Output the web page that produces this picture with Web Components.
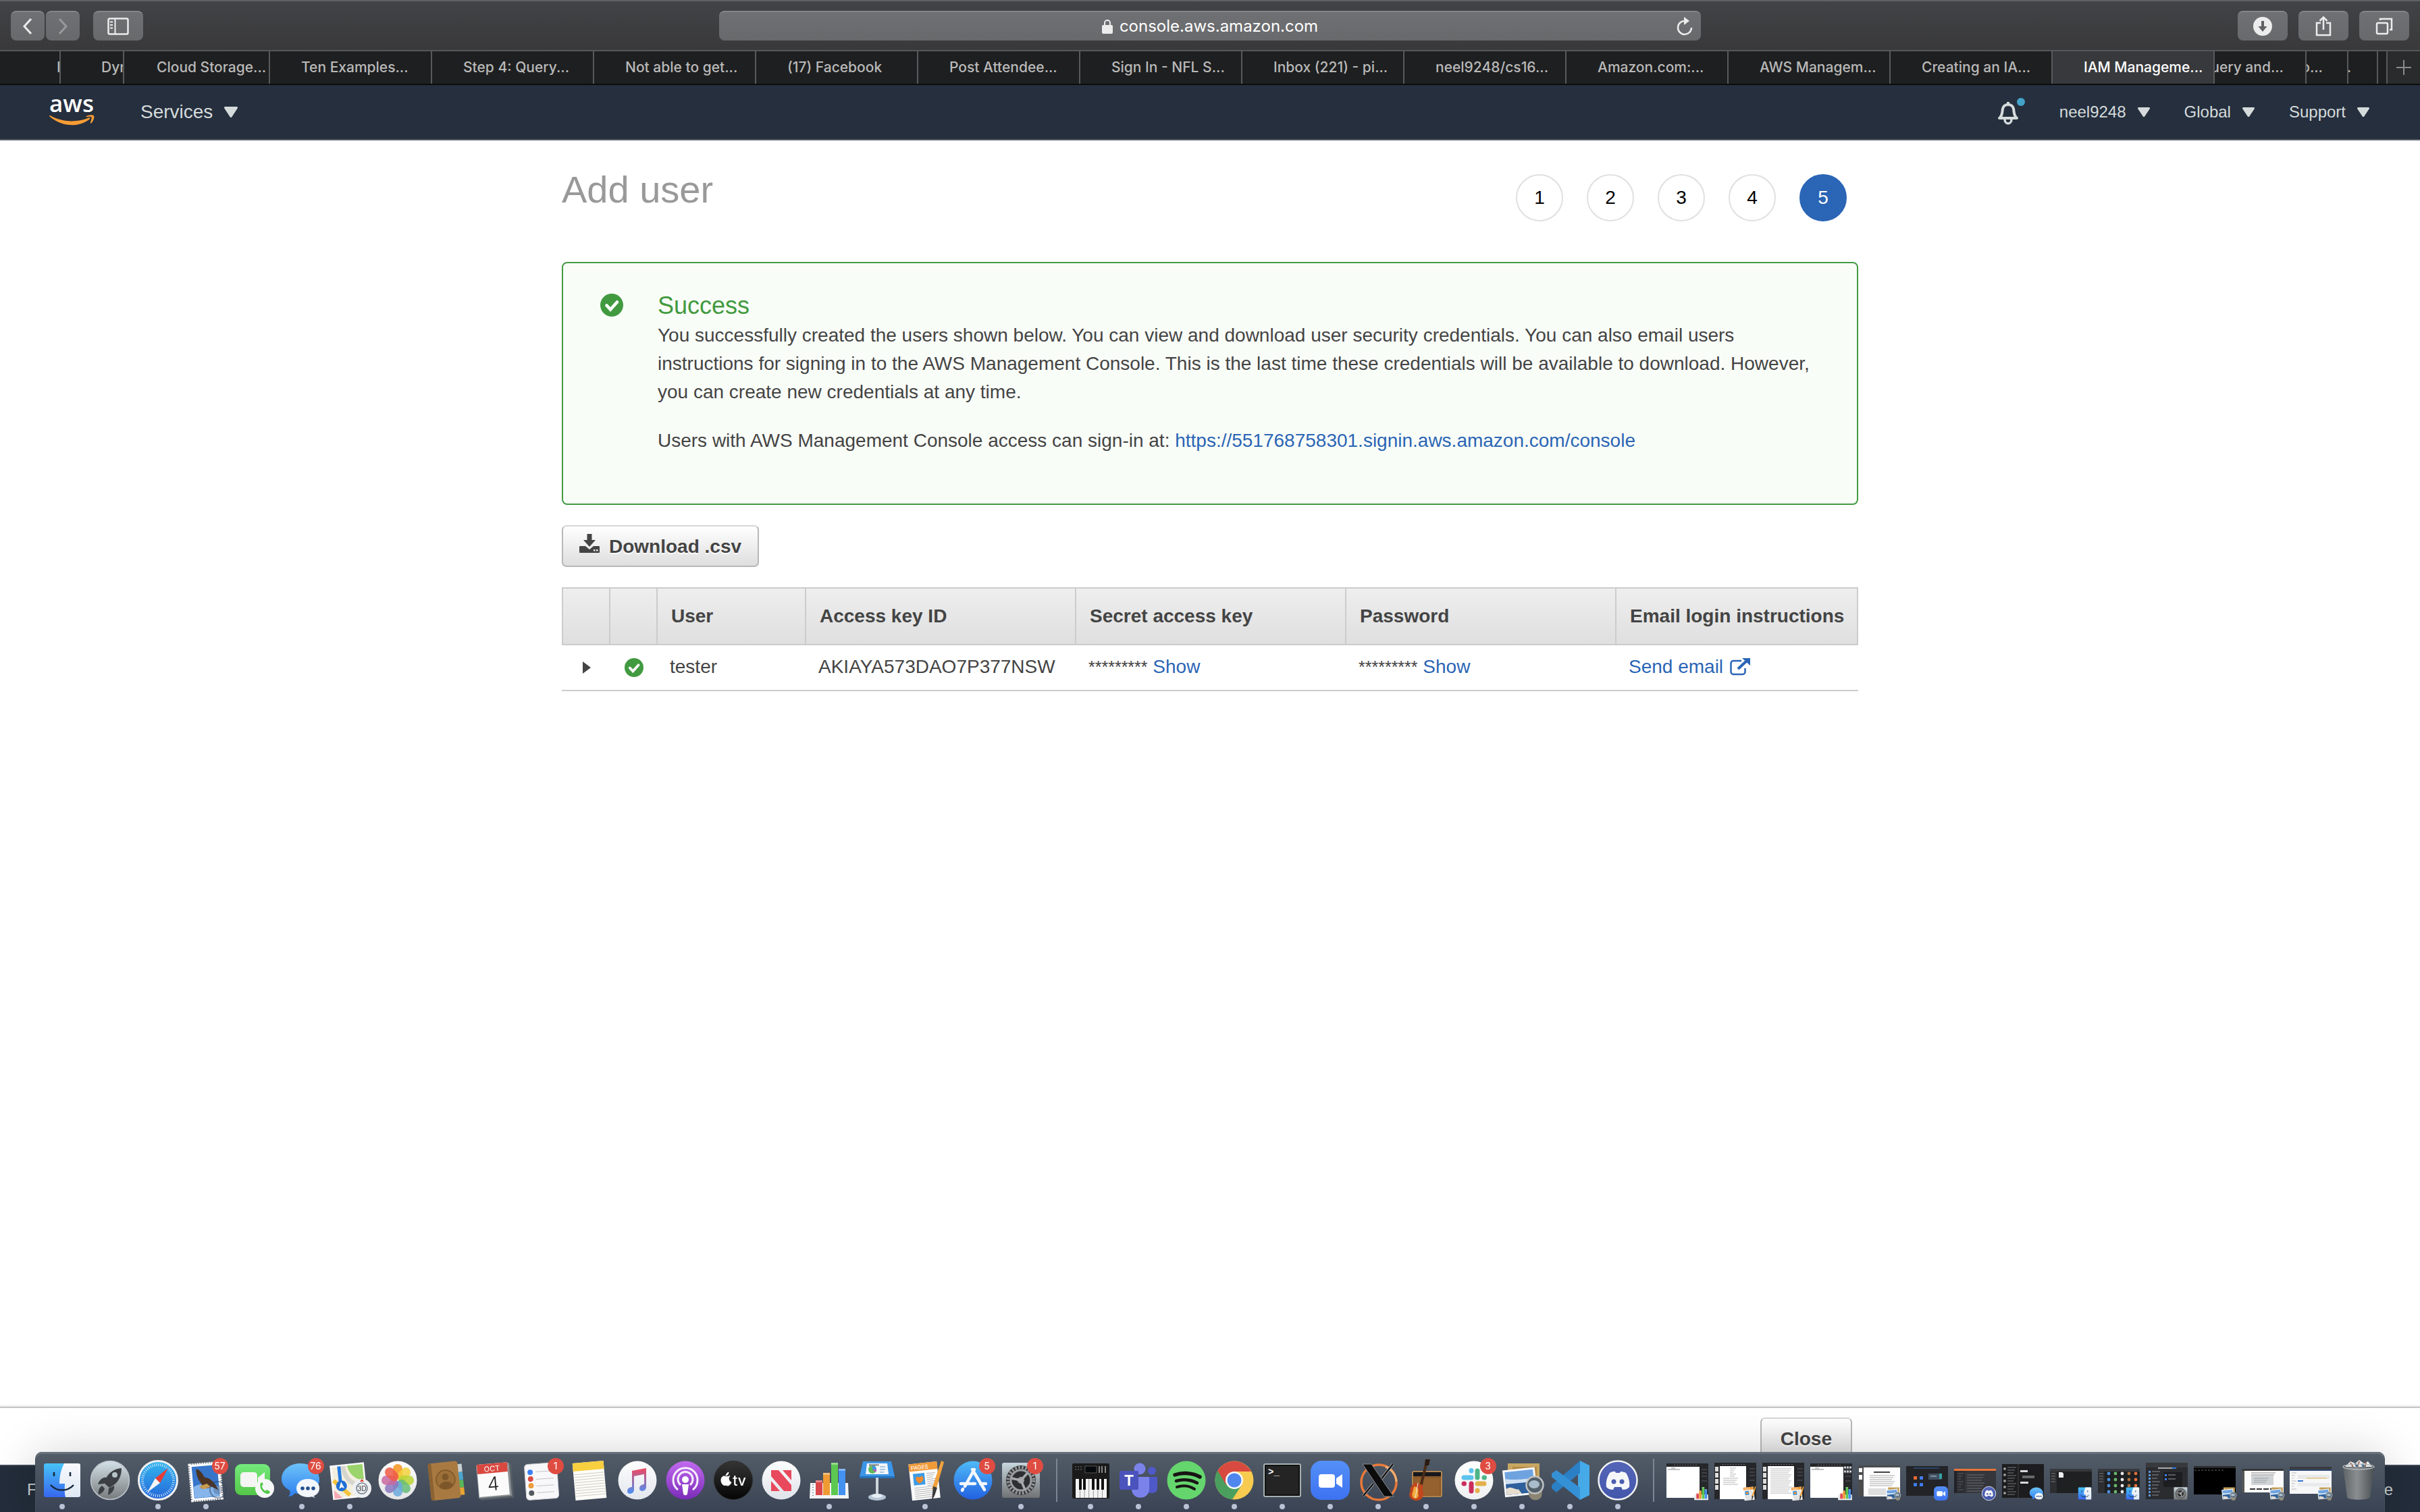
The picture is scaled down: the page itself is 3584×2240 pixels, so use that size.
<!DOCTYPE html>
<html lang="en">
<head>
<meta charset="utf-8">
<title>IAM Management Console</title>
<style>
  html, body { margin: 0; height: 100%; }
  body { font-family: "Liberation Sans", Arial, sans-serif; font-size: 28px; line-height: 42px; color: #444; background: #fff; overflow: hidden; }
</style>
</head>
<body>
<desktop-screen>
  <browser-toolbar slot="chrome"></browser-toolbar>
  <browser-tabs slot="chrome"></browser-tabs>
  <aws-nav slot="chrome"></aws-nav>
  <add-user-page></add-user-page>
  <wizard-actions slot="bottom"></wizard-actions>
  <aws-footer slot="bottom"></aws-footer>
  <mac-dock slot="dock"></mac-dock>
</desktop-screen>
<script>
const component = (name, render) => customElements.define(name, class extends HTMLElement {
  connectedCallback() {
    if (this.shadowRoot) return;
    const root = this.attachShadow({ mode: 'open' });
    const template = document.createElement('template');
    template.innerHTML = '<style>:host,*{box-sizing:border-box}</style>' + render(this);
    root.append(template.content.cloneNode(true));
  }
});

/* ---------- shell ---------- */
component('desktop-screen', () => `
  <style>
    :host { display: flex; flex-direction: column; height: 100vh; overflow: hidden; }
    main { flex: 1; min-height: 0; }
    ::slotted([slot]) { flex-shrink: 0; }
  </style>
  <slot name="chrome"></slot>
  <main><slot></slot></main>
  <slot name="bottom"></slot>
  <slot name="dock"></slot>`);

/* ---------- browser ---------- */
component('tool-button', () => `
  <style>
    :host { display: block; }
    button { display: flex; align-items: center; justify-content: center; width: var(--w, 74px); height: 44px; padding: 0; border: 0;
      border-top: 2px solid #858688; border-radius: 8px; background: linear-gradient(#6f7073, #68696b); }
  </style>
  <button type="button"><slot></slot></button>`);

component('browser-toolbar', () => `
  <style>
    :host { display: flex; align-items: center; justify-content: space-between; height: 76px; padding: 0 16px; font-family: Inter, sans-serif;
      border-top: 2px solid #5f6164; border-bottom: 2px solid #555759; background: linear-gradient(#424346, #39393b); }
    .group { display: flex; gap: 16px; flex: 1; }
    .nav { display: flex; gap: 2px; margin-right: 4px; --w: 50px; }
    .right { justify-content: flex-end; }
    form { display: flex; align-items: center; flex: 0 1 1454px; height: 44px; margin: 0; padding: 0 12px; border-radius: 8px;
      border-top: 2px solid #858688; background: linear-gradient(#6f7073, #68696b); }
    label { flex: 1; display: flex; align-items: center; justify-content: center; gap: 10px; padding-left: 24px; }
    input { field-sizing: content; border: 0; padding: 0; outline: 0; background: none; color: #fff; font: 24px/40px Inter, sans-serif; }
    .reload { display: flex; padding: 0; border: 0; background: none; }
    svg { display: block; fill: none; stroke: #ececec; stroke-width: 3; }
  </style>
  <div class="group">
    <div class="nav">
      <tool-button><svg width="16" height="26"><path d="M13 2 3 13l10 11"/></svg></tool-button>
      <tool-button><svg width="16" height="26" style="stroke:#98999b"><path d="M3 2l10 11L3 24"/></svg></tool-button>
    </div>
    <tool-button><svg width="32" height="26"><rect x="1.500" y="1.500" width="29" height="23" rx="2" stroke-width="2.500"/><path d="M11.500 2v22" stroke-width="2"/><path d="M4 6.500h4M4 11h4M4 15.500h4" stroke-width="2"/></svg></tool-button>
  </div>
  <form>
    <label><svg width="16" height="22"><path d="M4 10V6a4 4 0 0 1 8 0v4" stroke-width="2"/><rect y="9" width="16" height="13" rx="2" fill="#ececec" stroke="none"/></svg>
      <input aria-label="Address" value="console.aws.amazon.com"></label>
    <button class="reload" type="button" aria-label="Reload"><svg width="24" height="28"><path d="M13 6a10 10 0 1 0 9 10" stroke-width="2.500"/><path d="M11 0l8 6-8 6z" fill="#ececec" stroke="none"/></svg></button>
  </form>
  <div class="group right">
    <tool-button><svg width="28" height="28"><circle cx="14" cy="14" r="14" fill="#ececec" stroke="none"/><path d="M14 6v10" stroke="#606163" stroke-width="4"/><path d="M7.500 14h13L14 22z" fill="#606163" stroke="none"/></svg></tool-button>
    <tool-button><svg width="26" height="32"><path d="M9 11H3v18h20V11h-6M13 21V3M7.500 8 13 2.500 18.500 8" stroke-width="2.500"/></svg></tool-button>
    <tool-button><svg width="26" height="26"><rect x="2" y="8" width="16" height="16" rx="2" stroke-width="2.500"/><path d="M7 4V2h17v16h-3" stroke-width="2.500"/></svg></tool-button>
  </div>`);

component('browser-tab', () => `
  <style>
    :host { display: flex; min-width: 0; height: 48px; overflow: hidden; border-right: 2px solid #58595b; background: #1e1f20; color: #b9b9b9; }
    :host([selected]) { background: #38393c; color: #fff; }
    button { flex: 1; display: flex; justify-content: var(--side, flex-start); min-width: 0; padding: 0 var(--after, 0) 0 var(--before, 46px); border: 0; background: none; color: inherit; font: 500 21px/48px Inter, sans-serif; white-space: nowrap; }
    :host([cut]) { --side: flex-end; --before: 0; }
  </style>
  <button type="button"><slot></slot></button>`);

component('browser-tabs', () => {
  const full = ['Ten Examples...', 'Step 4: Query...', 'Not able to get...', '(17) Facebook', 'Post Attendee...', 'Sign In - NFL S...', 'Inbox (221) - pi...', 'neel9248/cs16...', 'Amazon.com:...', 'AWS Managem...', 'Creating an IA...'];
  return `
  <style>
    :host { display: flex; height: 50px; border-bottom: 2px solid #0c0c0c; background: #1e1f20; }
    .full { flex: 240 1 0; }
    .add { display: flex; align-items: center; justify-content: center; flex: 0 0 48px; padding: 0; border: 0; background: #2a2b2c; }
    .s1 { flex: 0 0 90px; --before: 84px; } .s2 { flex: 0 0 94px; --before: 60px; } .s3 { flex: 0 0 216px; --before: 48px; }
    .e1 { flex: 0 0 136px; --after: 32px; } .e2 { flex: 0 0 62px; --after: 36px; } .e3 { flex: 0 0 44px; --after: 38px; } .e4 { flex: 0 0 14px; }
  </style>
  <browser-tab class="s1">I</browser-tab><browser-tab class="s2">Dyr</browser-tab><browser-tab class="s3">Cloud Storage...</browser-tab>
  ${full.map(t => `<browser-tab class="full">${t}</browser-tab>`).join('')}
  <browser-tab class="full" selected>IAM Manageme...</browser-tab>
  <browser-tab class="e1" cut>uery and...</browser-tab><browser-tab class="e2" cut>o...</browser-tab><browser-tab class="e3" cut>.</browser-tab><browser-tab class="e4"></browser-tab>
  <button class="add" type="button" aria-label="New tab"><svg width="22" height="22" stroke="#8b8b8b" stroke-width="2"><path d="M11 0v22M0 11h22"/></svg></button>`;
});

/* ---------- console header ---------- */
component('nav-menu', () => `
  <style>
    :host { display: block; }
    button { display: flex; align-items: center; gap: 17px; padding: 0; border: 0; background: none; color: #d5dbdb; font: inherit; }
    svg { display: block; width: var(--caret, 18px); }
  </style>
  <button type="button"><slot></slot><svg viewBox="0 0 20 16" fill="#d5dbdb"><path d="M1.500 0h17a1.500 1.500 0 0 1 1.200 2.400l-8.500 13a1.500 1.500 0 0 1-2.400 0L.3 2.400A1.500 1.500 0 0 1 1.500 0z"/></svg></button>`);

component('aws-nav', () => `
  <style>
    :host { display: flex; align-items: center; justify-content: space-between; height: 82px; padding: 0 75px 0 73px; border-bottom: 2px solid #545b64; background: #252f3e; }
    .left { display: flex; align-items: center; gap: 68px; font-size: 28px; --caret: 20px; }
    .right { display: flex; align-items: center; gap: 51px; font-size: 24px; }
    .bell { padding: 0; border: 0; background: none; }
    svg { display: block; }
  </style>
  <div class="left">
    <a href="#" aria-label="aws"><svg width="67" height="44" viewBox="0 0 67 44"><text x="33" y="22" text-anchor="middle" font-family="Open Sans, sans-serif" font-weight="600" font-size="35" fill="#fff">aws</text>
      <g fill="#f79c34"><path d="M1 27C19 37 40 38 58.500 30.500c1.500-.6 2.500 1 1.300 2C44 45.500 18 44 .4 28.500-.4 27.600.2 26.600 1 27z"/><path d="M54.500 28.500c3-2.500 9-3 11-1.500s.5 8-3.500 11.500c-.8.7-1.500.2-1.200-.7 1-3 2.500-7 1.500-8.300s-4-.8-7-.3c-1 .2-1.500-.2-.8-.7z"/></g></svg></a>
    <nav-menu>Services</nav-menu>
  </div>
  <div class="right">
    <button class="bell" type="button" aria-label="Notifications"><svg width="42" height="42" viewBox="0 0 42 42"><path d="M4 30c5-4 4-9 5-14 1-4 4-6 8-6s7 2 8 6c1 5 0 10 5 14z" fill="none" stroke="#d5dbdb" stroke-width="4" stroke-linejoin="round"/><path d="M17 6v4" stroke="#d5dbdb" stroke-width="4"/><path d="M12 32a5 6 0 0 0 10 0" fill="none" stroke="#d5dbdb" stroke-width="3.500"/><circle cx="36" cy="6" r="6" fill="#44a3c9"/></svg></button>
    <nav-menu>neel9248</nav-menu><nav-menu>Global</nav-menu><nav-menu>Support</nav-menu>
  </div>`);

/* ---------- wizard ---------- */
component('check-badge', () => `
  <style>:host { display: block; width: var(--size, 28px); height: var(--size, 28px); } svg { display: block; }</style>
  <svg viewBox="0 0 34 34"><circle cx="17" cy="17" r="17" fill="#429a40"/><path d="M9.500 17.500l5.500 6 10-11" fill="none" stroke="#fff" stroke-width="4.600" stroke-linecap="round"/></svg>`);

component('console-button', () => `
  <style>
    :host { display: inline-block; }
    button { display: flex; align-items: baseline; gap: 14px; height: 62px; padding: 9px var(--pad, 25px) 0; border: 2px solid #b8b8b8; border-top-color: #d6d6d6; border-radius: 7px;
      background: linear-gradient(#fff, #dedede); color: #444; font: bold 28px/42px "Liberation Sans", Arial, sans-serif; text-shadow: 0 2px 1px #fff; }
  </style>
  <button type="button"><slot name="icon"></slot><slot></slot></button>`);

component('step-list', () => `
  <style>
    :host { display: block; }
    ol { display: flex; gap: 35px; margin: 0; padding: 0; list-style: none; }
    li { display: flex; align-items: center; justify-content: center; width: 70px; height: 70px; border: 2px solid #e0e0e0; border-radius: 50%; color: #000; }
    li[aria-current] { border-color: #2b65b5; background: #2b65b5; color: #fff; }
  </style>
  <ol><li>1</li><li>2</li><li>3</li><li>4</li><li aria-current="step">5</li></ol>`);

component('success-alert', () => `
  <style>
    :host { display: flex; gap: 51px; padding: 40px 40px 72px 55px; border: 2px solid #449a42; border-radius: 8px; background: #f9fdf8; }
    check-badge { --size: 34px; margin-top: 5px; flex: none; }
    h2 { margin: 0; font-size: 36px; font-weight: normal; line-height: 46px; color: #429a40; }
    p { margin: 0 0 30px; } p:last-child { margin: 0; }
    a { color: #2b65b5; text-decoration: none; }
  </style>
  <check-badge></check-badge>
  <div>
    <h2>Success</h2>
    <p>You successfully created the users shown below. You can view and download user security credentials. You can also email users instructions for signing in to the AWS Management Console. This is the last time these credentials will be available to download. However, you can create new credentials at any time.</p>
    <p>Users with AWS Management Console access can sign-in at: <a href="#">https://551768758301.signin.aws.amazon.com/console</a></p>
  </div>`);

component('credentials-table', () => `
  <style>
    :host { display: block; }
    table { width: 100%; table-layout: fixed; border-collapse: separate; border-spacing: 0; }
    .icon { width: 70px; } .user { width: 220px; } .key { width: 400px; }
    th { height: 86px; padding: 0 0 0 20px; border: 2px solid #ccc; border-right-width: 0; background: linear-gradient(#eee, #dfdfdf); text-align: left; white-space: nowrap; }
    th:last-child { border-right-width: 2px; }
    td { height: 68px; padding: 0 0 2px 20px; border-bottom: 2px solid #ccc; white-space: nowrap; }
    td.mark { padding: 0 0 0 4px; } td.mark > * { margin: 0 auto; }
    a { color: #2b65b5; text-decoration: none; }
    .mask { font-size: 25px; }
    button { display: block; padding: 0; border: 0; background: none; }
    svg { display: block; }
    .mail { display: inline-flex; align-items: center; gap: 10px; }
  </style>
  <table>
    <colgroup><col class="icon"><col class="icon"><col class="user"><col class="key"><col class="key"><col class="key"><col></colgroup>
    <thead><tr><th></th><th></th><th>User</th><th>Access key ID</th><th>Secret access key</th><th>Password</th><th>Email login instructions</th></tr></thead>
    <tbody><tr>
      <td class="mark"><button type="button" aria-label="Expand"><svg width="12" height="18"><path d="M0 0l12 9-12 9z" fill="#444"/></svg></button></td>
      <td class="mark"><check-badge></check-badge></td>
      <td>tester</td><td>AKIAYA573DAO7P377NSW</td>
      <td><span class="mask">*********</span> <a href="#">Show</a></td>
      <td><span class="mask">*********</span> <a href="#">Show</a></td>
      <td><a class="mail" href="#">Send email<svg width="30" height="26" viewBox="0 0 30 26"><path d="M17 4H5a3.500 3.500 0 0 0-3.500 3.500v13A3.500 3.500 0 0 0 5 24h14a3.500 3.500 0 0 0 3.500-3.500V15" fill="none" stroke="#2b65b5" stroke-width="2.500"/><path d="M12 16 26 3" stroke="#2b65b5" stroke-width="4"/><path d="M18 0h12v11z" fill="#2b65b5"/></svg></a></td>
    </tr></tbody>
  </table>`);

component('add-user-page', () => `
  <style>
    :host { display: flex; flex-direction: column; align-items: stretch; gap: 30px; max-width: 1920px; margin: 0 auto; }
    header { display: flex; align-items: flex-start; justify-content: space-between; padding: 40px 17px 30px 0; }
    h1 { margin: 0; font-size: 56px; font-weight: normal; line-height: 66px; color: #999; }
    step-list { margin-top: 10px; }
    svg { display: block; }
    console-button { align-self: flex-start; --pad: 24px; }
  </style>
  <header><h1>Add user</h1><step-list></step-list></header>
  <success-alert></success-alert>
  <console-button><svg slot="icon" width="30" height="28" viewBox="0 0 30 28" fill="#444"><path d="M11.500 0h7v9h5.500L15 19 6 9h5.500z"/><path fill-rule="evenodd" d="M1 18h8l6 5 6-5h8a1 1 0 0 1 1 1v8a1 1 0 0 1-1 1H1a1 1 0 0 1-1-1v-8a1 1 0 0 1 1-1zm20 5v2.500h2.500V23zm4 0v2.500h2.500V23z"/></svg>Download .csv</console-button>
  <credentials-table></credentials-table>`);

component('wizard-actions', () => `
  <style>
    :host { display: block; height: 86px; border-top: 2px solid #c6c6c6; box-shadow: 0 -1px 3px #ddd; background: #fff; }
    div { display: flex; justify-content: flex-end; max-width: 1920px; margin: 0 auto; padding: 14px 9px 0 0; --pad: 28px; }
  </style>
  <div><console-button>Close</console-button></div>`);

component('aws-footer', () => `
  <style>
    :host { position: relative; display: flex; justify-content: space-between; height: 70px; padding: 12px 40px; border-top: 2px solid #3f4956; background: #232d3b; color: #c9cfd2; font-size: 24px; line-height: 46px; }
  </style>
  <span>F</span><span>e</span>`);

/* ---------- dock artwork, drawn on a 64 x 64 grid ---------- */
const grad = (id, a, b) => `<linearGradient id="${id}" x1="0" y1="0" x2="0" y2="1"><stop stop-color="${a}"/><stop offset="1" stop-color="${b}"/></linearGradient>`;
const disc = (id, a, b, ring = '') => `<defs>${grad(id, a, b)}</defs><circle cx="32" cy="32" r="28.500" fill="url(#${id})" ${ring}/>`;
const repeat = (n, f) => Array.from({ length: n }, (_, i) => f(i)).join('');
const lines = (x, y, w, n, step, c = '#b5b5b5') => repeat(n, i => `<path d="M${x} ${y + i * step}h${w - (i % 3) * 2}" stroke="${c}"/>`);

const ART = {
  finder: `<defs>${grad('fa', '#47c3f7', '#3767ef')}${grad('fb', '#f8f9fc', '#dfe8f4')}</defs><rect x="5" y="7" width="54" height="50" rx="3" fill="url(#fa)"/><path d="M35 7h21a3 3 0 0 1 3 3v44a3 3 0 0 1-3 3H37c-2-8-1-14-1-20h-8c0-10 2-20 7-30z" fill="url(#fb)"/><path d="M20 20v6M44 20v6" stroke="#16283c" stroke-width="2.500"/><path d="M15 39c9 10 25 10 34 0" fill="none" stroke="#16283c" stroke-width="2.500"/>`,
  launchpad: disc('g', '#d3e1e8', '#777b7d', 'stroke="#c0c7cc" stroke-width="1.500"') + `<g fill="#3c4044"><path d="M49 14c-13 1-22 9-26 22l8 7c12-6 18-15 18-29z"/><path d="M27 28c-6-1-11 4-13 10l9-1zM38 40c1 6-3 11-9 14l1-10zM20 40c-4 3-6 8-5 13 4-1 8-4 9-9z"/></g><circle cx="39" cy="24" r="4" fill="#b7c2c8"/>`,
  safari: disc('g', '#33b7f0', '#2566d8', 'stroke="#eef0f2" stroke-width="3"') + `<circle cx="32" cy="32" r="23" fill="none" stroke="#cfe6fa" stroke-width="4" stroke-dasharray="1 2"/><path d="M47 14 28 29l7 7z" fill="#e93b36"/><path d="M16 50l12-21 7 7z" fill="#f5f5f5"/>`,
  mail: `<g transform="rotate(-5 32 32)"><rect x="10" y="8" width="43" height="52" fill="#3f7fd0" stroke="#f4f4f4" stroke-width="5" stroke-dasharray="2.500 1"/><rect x="11" y="9" width="41" height="50" fill="#3775c9" stroke="#fff" stroke-width="3"/><path d="M13 40c14-7 25 0 37 2v15H13z" fill="#86b5ec"/><path d="M19 14c6 2 9 8 11 13l7 3c5 4 9 9 12 18l-10-6-5 2-11-1c3-3 3-5 1-8-4-6-6-14-5-21z" fill="#4c3424"/><path d="M21 40l12-3 5 5-11 3z" fill="#c79a52"/></g><circle cx="50" cy="46" r="12" fill="none" stroke="#2f4160" stroke-width="2" opacity=".5"/><circle cx="50" cy="46" r="7" fill="#2f4160" opacity=".3"/>`,
  facetime: `<defs>${grad('g', '#74ea7c', '#54c748')}</defs><rect x="4" y="8" width="52" height="46" rx="9" fill="url(#g)"/><rect x="12" y="20" width="25" height="22" rx="5" fill="#f5f5f3"/><path d="M38 28l10-8v21l-10-7z" fill="#f5f5f3"/><circle cx="48" cy="44" r="14" fill="#f6f7f7"/><path d="M42 36c-3 8 5 17 12 16 2-1 2-3 1-4l-4-2-2 2c-3-2-5-5-5-8l2-2-2-3z" fill="#51c94b"/>`,
  messages: `<defs>${grad('g', '#6cc3f8', '#2f7ff0')}</defs><path d="M30 7c16 0 28 10 28 24S46 52 30 52c-3 0-6 0-8-1-2 3-6 5-10 5 3-3 3-6 2-9C7 43 2 38 2 30 2 17 14 7 30 7z" fill="url(#g)"/><path d="M41 39c10 0 17 6 17 14s-8 13-17 13-17-5-17-13 7-14 17-14z" transform="translate(0 -9)" fill="#f3f7fb"/><path d="M48 54l4 4-9-3z" fill="#f3f7fb"/><g fill="#234f8f"><circle cx="33" cy="44" r="2.800"/><circle cx="41" cy="44" r="2.800"/><circle cx="49" cy="44" r="2.800"/></g>`,
  maps: `<g transform="rotate(-6 32 32)"><rect x="6" y="9" width="48" height="48" fill="#f3efdf" stroke="#fafafa" stroke-width="3"/><path d="M30 10h23v24c-13-2-21-11-23-24z" fill="#9bd36c"/><path d="M24 10c1 20 10 30 29 31" fill="none" stroke="#d6d6ce" stroke-width="7"/><path d="M8 30l22 24" stroke="#f5c43c" stroke-width="6"/><path d="M7 44l12 13H7z" fill="#f4a9b5"/><path d="M18 10v32" stroke="#2479e0" stroke-width="5"/><circle cx="19" cy="39" r="8" fill="#1f6fd5"/><path d="M19 33l4 10-4-2-4 2z" fill="#fff"/></g><circle cx="50" cy="44" r="14" fill="#eef1f3"/><circle cx="50" cy="44" r="8" fill="none" stroke="#6f7f8c" stroke-width="1.500"/><text x="50" y="48" text-anchor="middle" font-family="Inter" font-size="10" fill="#333">3D</text><path d="M50 30l3 4h-6z" fill="#e23b30"/>`,
  photos: disc('g', '#fdfdfd', '#e4e4e6') + ['#f7941e', '#f2d13c', '#b8d433', '#67bd77', '#6aa9dd', '#8b77c0', '#c868a0', '#ee5a46'].map((c, i) => `<rect x="25" y="8" width="14" height="23" rx="7" fill="${c}" opacity=".85" transform="rotate(${i * 45} 32 32)"/>`).join(''),
  contacts: `<g transform="rotate(-6 32 32)"><path d="M50 10h8v12h-8z" fill="#c9ced1"/><path d="M50 22h8v12h-8z" fill="#4ca6cf"/><path d="M50 34h8v11h-8z" fill="#59b65a"/><path d="M50 45h8v11h-8z" fill="#e8a534"/><rect x="8" y="5" width="44" height="55" rx="4" fill="#a87a42"/><rect x="8" y="5" width="5" height="55" rx="2" fill="#8b6232"/><circle cx="32" cy="31" r="14" fill="#9d7039" stroke="#7d5729" stroke-width="1.500"/><circle cx="32" cy="27" r="5" fill="#7d5729"/><path d="M22 40c2-8 18-8 20 0-5 6-15 6-20 0z" fill="#7d5729"/></g>`,
  calendar: `<g transform="rotate(-5 32 32)"><rect x="10" y="10" width="50" height="50" fill="#596066"/><rect x="8" y="8" width="49" height="49" fill="#8d9296"/><rect x="9" y="7" width="45" height="48" fill="#fbfbfb"/><path d="M9 7h45v14H9z" fill="#d9483f"/><text x="31" y="18.500" text-anchor="middle" font-family="Inter" font-size="11" fill="#fff">OCT</text><text x="31" y="47" text-anchor="middle" font-family="Inter" font-size="28" font-weight="300" fill="#222">4</text></g>`,
  reminders: `<g transform="rotate(-4 32 32)"><rect x="8" y="7" width="48" height="53" rx="5" fill="#f8f8fa" stroke="#d0d0d4"/><path d="M24 19h22M24 30h26M24 40h26M24 50h26" stroke="#c3c3c7"/><circle cx="16" cy="19" r="4" fill="#3b7ff3"/><circle cx="16" cy="29" r="4" fill="#dc4b46"/><circle cx="16" cy="39" r="4" fill="#ec9c3c"/><circle cx="16" cy="50" r="4" fill="#565b62"/></g>`,
  notes: `<g transform="rotate(-5 32 32)"><rect x="9" y="5" width="46" height="55" fill="#fdfcf8"/><path d="M9 5h46v12H9z" fill="#f8cf3f"/>${repeat(9, i => `<path d="M10 ${22 + i * 4}h44" stroke="#cfccc4"/>`)}</g>`,
  music: disc('g', '#fdfdfd', '#e2e6ed') + `<defs>${grad('m', '#f0485f', '#4a91f7')}</defs><path d="M24 18l21-4v28c0 7-10 8-10 2 0-4 4-6 7-6V23l-15 3v20c0 7-10 8-10 2 0-4 4-6 7-6z" fill="url(#m)"/>`,
  podcasts: disc('g', '#c26af0', '#7a2cb8') + `<g fill="none" stroke="#f6eefb" stroke-width="3"><path d="M21 46a18 18 0 1 1 22 0M25 39a11 11 0 1 1 14 0"/></g><circle cx="32" cy="31" r="5" fill="#fff"/><path d="M27 38h10l-2 14c-1 3-5 3-6 0z" fill="#fff"/>`,
  tv: disc('g', '#353535', '#050505', 'stroke="#2c2c2c" stroke-width="1"') + `<path d="M21 24c1 0 1-3 4-4 0 3-2 5-4 5zm-3 2c3 0 6 2 9-1-3 4-2 8 2 10-2 5-5 6-8 4-3 2-7-2-7-7 0-4 2-6 4-6z" fill="#fff" stroke="#fff"/><text x="41" y="40" text-anchor="middle" font-family="Inter" font-weight="500" font-size="21" fill="#fff">tv</text>`,
  news: disc('g', '#fdfdfd', '#dfe3ea') + `<g fill="#e8495c"><path d="M17 17h11l19 22v9H36L17 26z"/><path d="M34 17h13v15zM17 33l13 15H17z"/></g>`,
  numbers: `<path d="M4 36h56l1 23H3z" fill="#f3f4f6"/><path d="M8 38v18" stroke="#77808c" stroke-width="2" stroke-dasharray="1 3"/><rect x="12" y="32" width="10" height="22" fill="#d9474c"/><rect x="23" y="21" width="10" height="33" fill="#ef9a33"/><rect x="35" y="6" width="10" height="48" fill="#5cc851"/><rect x="46" y="15" width="10" height="39" fill="#4391f0"/><path d="M12 32h10v3H12zM23 21h10v3H23zM35 6h10v3H35zM46 15h10v3H46z" fill="#fff" opacity=".35"/>`,
  keynote: `<path d="M11 4h42l5 22H6z" fill="#3c95e6"/><path d="M6 26h52v3H6z" fill="#2472bb"/><path d="M17 7h30l2 16H15z" fill="#f2f6fa"/><circle cx="25" cy="16" r="6" fill="#5dbb58"/><path d="M25 16v-6a6 6 0 0 1 6 6z" fill="#3a9ae3"/><path d="M25 16l5 4a6 6 0 0 0 1-4z" fill="#c350c4"/><path d="M36 12h8M36 16h8M36 20h6" stroke="#a9c6df" stroke-width="2"/><text x="20" y="10.500" font-family="Inter" font-size="3" font-weight="700" fill="#333">KEYNOTE</text><path d="M32 28v27" stroke="#ccd3da" stroke-width="4"/><ellipse cx="32" cy="57" rx="13" ry="5" fill="#b6c6d6"/><ellipse cx="32" cy="55" rx="8" ry="3" fill="#e6edf3"/>`,
  pages: `<g transform="rotate(-6 32 32)"><rect x="10" y="6" width="42" height="54" fill="#fafafa"/><path d="M10 6h42v11H10z" fill="#f19a38"/><text x="13" y="15" font-family="Inter" font-size="8" fill="#fff">PAGES</text><rect x="15" y="21" width="17" height="17" fill="#3d9be5"/><path d="M23 36c-6-6-5-9-2-11l3 2 4-2c4 5 1 8-5 11z" fill="#f18a2a"/>${lines(35, 22, 13, 7, 3)}${lines(15, 42, 32, 6, 3)}</g><path d="M56 3l4 2-12 42-6-2z" fill="#f1a23b"/><path d="M44 41l6 2-4 12-4 7z" fill="#3b3b3d"/>`,
  appstore: disc('g', '#4fbaf8', '#2260e0') + `<g stroke="#f4f8fd" stroke-width="4.500" stroke-linecap="round"><path d="M34 16 20 41M31 16l18 30M14 37h21M43 37h8M17 45l-1 2"/></g>`,
  settings: `<defs>${grad('g', '#c7d6dd', '#707274')}</defs><rect x="4" y="6" width="56" height="52" rx="3" fill="url(#g)"/><circle cx="32" cy="32" r="22" fill="#2e2f31"/><circle cx="32" cy="32" r="19" fill="none" stroke="#8f9294" stroke-width="5" stroke-dasharray="3 2"/><circle cx="32" cy="32" r="15" fill="none" stroke="#9b9ea0" stroke-width="3"/><circle cx="32" cy="32" r="5" fill="#9b9ea0"/><path d="M32 32 18 29M32 32l10-11M32 32l6 14" stroke="#a7aaac" stroke-width="3.500"/>`,
  piano: `<rect x="5" y="7" width="55" height="52" rx="2" fill="#1a1a1a"/><rect x="24" y="11" width="17" height="10" fill="#06090b" stroke="#555"/><path d="M9 12h12M9 16h12" stroke="#777" stroke-dasharray="2 2"/><path d="M45 11v10M49 11v10M54 11v10" stroke="#888" stroke-width="2"/><rect x="10" y="30" width="46" height="28" fill="#f4f4f4"/>${repeat(6, i => `<path d="M${16.500 + i * 6.600} 30v28" stroke="#999"/>`)}${[15, 21, 34, 41, 48].map(x => `<path d="M${x} 29h4v17h-4z" fill="#111"/>`).join('')}`,
  teams: `<circle cx="34" cy="15" r="8.500" fill="#7b83eb"/><circle cx="52" cy="18" r="6" fill="#5059c9"/><path d="M43 27h17v17c0 7-9 9-15 5z" fill="#5059c9"/><path d="M22 27h26v18c0 17-26 17-26 0z" fill="#7b83eb"/><rect x="4" y="18" width="28" height="28" rx="2" fill="#4b53bc"/><text x="18" y="40" text-anchor="middle" font-family="Inter" font-size="22" font-weight="700" fill="#fff">T</text>`,
  spotify: disc('g', '#65d56e', '#65d56e') + `<g fill="none" stroke="#191414" stroke-linecap="round"><path d="M15 24c12-4 26-3 37 3" stroke-width="5.500"/><path d="M17 33c10-3 22-2 31 3" stroke-width="4.500"/><path d="M18 42c9-3 18-2 26 3" stroke-width="4"/></g>`,
  chrome: `<circle cx="32" cy="32" r="28.500" fill="#f6cb50"/><path d="M32 32 7.300 17.750A28.500 28.500 0 0 1 56.700 18.500H32z" fill="#d84a3f"/><path d="M32 32 7.300 17.750A28.500 28.500 0 0 0 29 60.300L43 39z" fill="#4a9f5f"/><path d="M32 19h25a28.500 28.500 0 0 0-3-4L32 14zM7.300 17.750 20 39l12-20z" fill="#d84a3f"/><circle cx="32" cy="32" r="13" fill="#fafafa"/><circle cx="32" cy="32" r="10.500" fill="#4f87ee"/>`,
  terminal: `<rect x="4" y="7" width="56" height="50" rx="3" fill="#a6b0b1"/><rect x="6" y="9" width="52" height="46" rx="1" fill="#111"/><rect x="8" y="11" width="48" height="42" fill="#242424"/><text x="11" y="24" font-family="Liberation Mono" font-size="14" font-weight="700" fill="#fff">&gt;_</text>`,
  zoom: `<defs>${grad('g', '#5490f8', '#3d72f1')}</defs><rect x="3" y="3" width="58" height="58" rx="16" fill="url(#g)"/><rect x="15" y="23" width="24" height="20" rx="4" fill="#fff"/><path d="M41 29l9-6v20l-9-6z" fill="#fff"/>`,
  xquartz: `<circle cx="33" cy="35" r="26" fill="none" stroke="#e9793a" stroke-width="3.500"/><path d="M43 12a25 25 0 0 1 16 22" fill="none" stroke="#f0b070" stroke-width="3"/><path d="M54 8 36 31M25 37 10 55" stroke="#b9b9b9" stroke-width="4"/><path d="M54 8 36 31M25 37 10 55" stroke="#141414" stroke-width="2.500"/><path d="M9 8h13l33 48H41z" fill="#0c0c0c" stroke="#8a8a8a"/>`,
  garageband: `<rect x="12" y="19" width="43" height="37" rx="2" fill="#8a5a2b" stroke="#c99556" stroke-width="1.500"/><path d="M13 20h41v6H13z" fill="#16181c"/><path d="M15 29h37v25H15z" fill="#94612f"/><path d="M33 4 22 50" stroke="#4a2c17" stroke-width="4"/><path d="M31 1h7l-2 9h-6z" fill="#2a1a10"/><path d="M13 38c3-5 6-1 9 0 5-1 7 4 4 8 5 8 0 16-8 16S4 55 9 48c-2-4 1-7 4-10z" fill="#c3461c"/><path d="M14 42c5-2 8 4 6 9 2 5-1 8-4 8s-6-4-4-9z" fill="#f2aa3b"/><path d="M20 36l-4 22" stroke="#eee"/>`,
  slack: disc('g', '#fefefe', '#eef0f1') + `<g stroke-width="7" stroke-linecap="round"><path d="M28 17.500v.5M17 28h11" stroke="#5cc3ee"/><path d="M37 18v10M47 28h.5" stroke="#4fb587"/><path d="M28 37v11M17 37h.5" stroke="#cb2d5d"/><path d="M37 37h10M37 47v.5" stroke="#e3b14b"/></g>`,
  preview: `<rect x="11" y="7" width="47" height="40" fill="#c8a662"/><path d="M18 12h36v30H18z" fill="#b28a43"/><g transform="rotate(-6 28 36)"><rect x="5" y="15" width="48" height="40" fill="#f7f8f9"/><path d="M8 18h42v34H8z" fill="#6fa3e0"/><path d="M8 34h42v18H8z" fill="#2d609c"/><path d="M8 28c14 3 20 3 42 3v5H8z" fill="#cfe0f2"/><path d="M8 43c8-5 12 3 18 2l4 7H8z" fill="#e6ddce"/></g><path d="M40 40h23l-2 16c-3 7-15 7-18 0z" fill="#8c8574"/><circle cx="51" cy="39" r="12.500" fill="#53606a" stroke="#c0c3c4" stroke-width="2.500"/><ellipse cx="50" cy="38" rx="8" ry="6" fill="#a9bccb"/>`,
  vscode: `<path d="M47 3l14 7v44l-14 7-3-5V10z" fill="#46a9e8"/><path d="M47 3v18L12 50l-7-6v-5z" fill="#2b7fc4"/><path d="M47 61V43L12 17l-7 5v5z" fill="#3591d6"/>`,
  discord: disc('g', '#5566b8', '#4256ab', 'stroke="#f1f2f4" stroke-width="2.500"') + `<path d="M21 21c3-2 5-2 8-2l1 2h6l1-2c3 0 6 1 8 2 4 6 6 13 5 21-3 3-6 4-10 4l-2-4h-10l-2 4c-4 0-7-1-10-4-1-8 1-15 5-21z" transform="translate(-1 0)" fill="#f5f6f8"/><circle cx="26" cy="34" r="3.500" fill="#4b5db0"/><circle cx="38" cy="34" r="3.500" fill="#4b5db0"/>`,
  trash: `<defs><linearGradient id="g"><stop stop-color="#5f6467"/><stop offset=".45" stop-color="#8a8e90"/><stop offset="1" stop-color="#4a4f52"/></linearGradient></defs><path d="M12 12 20 4l7 3 6-5 7 5 6-3 7 9z" fill="#eceff1"/><path d="M20 6l5 8M33 4l-3 9M43 5l-2 9" stroke="#9b5c43" stroke-width="2"/><path d="M27 7l3 5M37 8l3 4" stroke="#3d6f96" stroke-width="3"/><path d="M9 12h46l-6 45c-1 5-33 5-34 0z" fill="url(#g)"/><ellipse cx="32" cy="12" rx="23" ry="4" fill="none" stroke="#b1b5b8" stroke-width="1.500"/>`
};

/* minimised windows: a frame, its contents, and the icon of the app it belongs to */
const win = (y, h, fill, body, app) => `<rect x="1" y="${y}" width="62" height="${h}" fill="${fill}"/>${body}<svg x="41" y="40" width="23" height="23" viewBox="0 0 64 64">${ART[app]}</svg>`;
const doc = (y, h, text, left, app) => win(y, h, '#26272a', `<path d="M${left ? 9 : 1} ${y + 5}h${left ? 39 : 49}v${h - 5}H${left ? 9 : 1}z" fill="#fff"/>${left ? repeat(4, i => `<rect x="2" y="${y + 6 + i * 9}" width="5" height="7" fill="#ddd"/>`) : ''}<path d="M53 ${y + 9}h8M53 ${y + 14}h8M53 ${y + 19}h8M53 ${y + 26}h8" stroke="#5b5d60"/><path d="M12 ${y + 2.500}h36" stroke="#666" stroke-dasharray="2 2"/>${text}`, app);
const dots = (cols, n, step, x, y) => repeat(n, i => `<circle cx="${x + (i % cols) * step}" cy="${y + Math.floor(i / cols) * 9}" r="2.400" fill="${['#4a90e2', '#e8e8e8', '#e0703c', '#68b96b', '#a9713c'][(i * 3) % 5]}"/>`);
const WINDOWS = {
  w1: doc(7, 51, '<path d="M3 16h18M8 14h6" stroke="#888"/>', false, 'numbers'),
  w2: doc(6, 54, lines(24, 14, 9, 5, 3) + lines(14, 29, 22, 4, 3), true, 'pages'),
  w3: doc(6, 54, lines(13, 15, 31, 13, 3), true, 'pages'),
  w4: doc(7, 51, '<path d="M3 16h18M8 14h6" stroke="#888"/><path d="M51 13h11M51 19h11" stroke="#cfd4d8" stroke-width="3" stroke-dasharray="3 1"/>', false, 'numbers'),
  w5: win(10, 46, '#fdfdfd', `<path d="M1 10h62v3H1z" fill="#4b4c4e"/><path d="M1 10h8v46H1z" fill="#4b4c4e"/><rect x="2" y="14" width="5" height="6" fill="#fff"/><rect x="2" y="24" width="5" height="7" fill="#fff"/><path d="M24 20h24" stroke="#444" stroke-width="2"/>${lines(18, 25, 37, 6, 3, '#aaa')}<path d="M16 44h26v10H16z" fill="#dedede"/>`, 'preview'),
  w6: win(11, 44, '#232427', `<path d="M12 14h38" stroke="#2f63a8"/><rect x="12" y="26" width="5" height="5" rx="1" fill="#ef6b32"/><g fill="#3f7df0"><rect x="21" y="26" width="5" height="5" rx="1"/><rect x="12" y="36" width="5" height="5" rx="1"/><rect x="21" y="36" width="5" height="5" rx="1"/></g><rect x="34" y="22" width="19" height="9" fill="#3f5063"/><path d="M37 26h9" stroke="#ccc"/><rect x="50" y="22" width="4" height="8" fill="#39a0a0"/>`, 'zoom'),
  w7: win(15, 36, '#34363b', `<path d="M1 15h62v3H1z" fill="#e8743a"/><path d="M1 18h4v33H1z" fill="#202226"/><path d="M6 18h11v33H6z" fill="#2b2d31"/>${lines(7, 22, 8, 7, 4, '#5b6068')}${lines(20, 24, 26, 7, 4, '#686c73')}`, 'discord'),
  w8: win(8, 50, '#1d1d1f', `<path d="M25 8v50" stroke="#444"/>${lines(9, 13, 13, 11, 4, '#77787a')}${repeat(5, i => `<circle cx="5" cy="${15 + i * 9}" r="2" fill="#999"/>`)}<g fill="#d8d8da"><rect x="28" y="17" width="11" height="3"/><rect x="31" y="25" width="18" height="4" fill="#68696b"/><rect x="28" y="34" width="12" height="3"/></g>`, 'messages'),
  w9: win(15, 36, '#1f2022', '<path d="M1 15h10v36H1z" fill="#2d2e31"/><path d="M1 15h62v4H1z" fill="#38393c"/><path d="M3 22h6M3 26h6M3 30h6M3 34h6" stroke="#777"/><path d="M14 20h5l2 2v6h-7z" fill="#eee"/>', 'finder'),
  w10: win(15, 36, '#1f2022', '<path d="M1 15h10v36H1z" fill="#2d2e31"/><path d="M1 15h62v4H1z" fill="#38393c"/><path d="M3 22h6M3 26h6M3 30h6M3 34h6" stroke="#777"/>' + dots(5, 20, 10, 17, 22), 'finder'),
  w11: win(6, 54, '#2b2c2f', `<path d="M1 6h62v7H1z" fill="#38393c"/><path d="M19 14h26" stroke="#aaa" stroke-width="2"/><path d="M40 14h6" stroke="#2e78e5" stroke-width="2"/>${repeat(8, i => `<rect x="5" y="${18 + i * 5}" width="3" height="3" fill="#5b96dd"/>`)}${lines(10, 19, 12, 8, 5, '#888')}<path d="M27 20h28v22H27z" fill="#1d1e20"/><rect x="29" y="23" width="3" height="3" fill="#3b7ff3"/><rect x="29" y="29" width="3" height="3" fill="#3b7ff3"/><path d="M34 24h11M34 30h11" stroke="#999"/>`, 'settings'),
  w12: win(11, 42, '#000', '<path d="M1 11h62v3H1z" fill="#2a2b2d"/><path d="M2 17h44" stroke="#666" stroke-dasharray="3 2"/>', 'preview'),
  w13: win(15, 35, '#fbfbfb', `<path d="M1 15h62v3H1z" fill="#39393b"/><path d="M1 18h4v32H1z" fill="#555"/>${lines(15, 21, 36, 2, 3, '#888')}<path d="M15 25h33v14H15z" fill="#cfd3d5"/>${lines(19, 29, 22, 3, 3, '#9da1a3')}<path d="M13 45h37" stroke="#333" stroke-width="2" stroke-dasharray="8 2"/>`, 'preview'),
  w14: win(12, 40, '#f7f7f8', `<path d="M1 12h62v4H1z" fill="#3b3c40"/><path d="M1 16h62v2H1z" fill="#2d4a75"/>${lines(4, 21, 7, 7, 4, '#bbb')}<path d="M13 24h47v6H13z" fill="#e6e8ea"/><path d="M13 33h8" stroke="#2f73d2" stroke-width="2"/><path d="M26 29h30" stroke="#e2b552"/><path d="M13 36h47v5H13z" fill="#e9ebed"/>`, 'preview')
};

component('dock-item', host => `
  <style>
    :host { position: relative; display: flex; flex: 1 1 0; flex-direction: column; align-items: center; min-width: 0; }
    button { padding: 0; border: 0; background: none; }
    svg { display: block; overflow: visible; font-weight: 400; }
    .dot { width: 8px; height: 8px; margin-top: 3px; border-radius: 50%; background: #b9c2d5; }
    .badge { position: absolute; left: calc(50% + 9px); top: -1px; width: 24px; height: 24px; border-radius: 50%; background: #df4c42; color: #fff; font: 14px/24px Inter, sans-serif; text-align: center; }
  </style>
  <button type="button" aria-label="${host.getAttribute('icon')}"><svg width="64" height="64" viewBox="0 0 64 64">${ART[host.getAttribute('icon')] || WINDOWS[host.getAttribute('icon')]}</svg></button>
  ${host.hasAttribute('open') ? '<span class="dot"></span>' : ''}
  ${host.hasAttribute('badge') ? `<span class="badge">${host.getAttribute('badge')}</span>` : ''}`);

component('mac-dock', () => {
  /* "*" marks a running app, ":n" its badge */
  const items = list => list.split(' ').map(s => {
    const [, name, open, badge] = s.match(/^(\w+)(\*?)(?::(\d+))?$/);
    return `<dock-item icon="${name}"${open ? ' open' : ''}${badge ? ` badge="${badge}"` : ''}></dock-item>`;
  }).join('');
  return `
  <style>
    :host { position: fixed; left: 52px; right: 52px; bottom: 0; display: flex; height: 89px; padding: 10px 3px 0; border: 1px solid #474f5a; border-top: 0; border-bottom: 0; border-radius: 10px 10px 0 0;
      background: linear-gradient(#535d68, #3a4354); box-shadow: inset 0 3px 0 #68727c, 0 6px 70px rgba(0,0,0,.2); }
    hr { flex: 0 0 2px; height: 64px; margin: 0 13px 0 17px; border: 0; background: #7c8594; }
  </style>
  ${items('finder* launchpad safari* mail*:57 facetime messages*:76 maps* photos contacts calendar reminders:1 notes music podcasts tv news numbers* keynote pages* appstore:5 settings*:1')}
  <hr>
  ${items('piano* teams* spotify* chrome* terminal* zoom* xquartz* garageband* slack*:3 preview* vscode* discord*')}
  <hr>
  ${items('w1 w2 w3 w4 w5 w6 w7 w8 w9 w10 w11 w12 w13 w14 trash')}`;
});
</script>
</body>
</html>
